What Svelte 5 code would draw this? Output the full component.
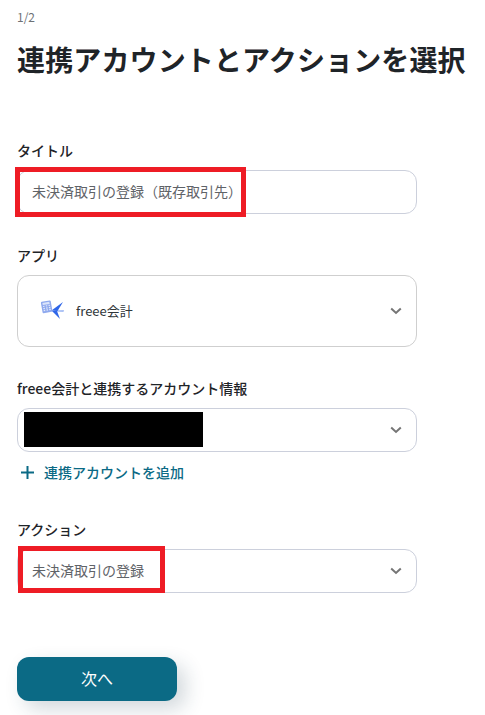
<script>
  let fields = {
    title: '未決済取引の登録（既存取引先）',
    app: 'freee会計',
    action: '未決済取引の登録'
  };
</script>

<div class="page">
  <div class="step">1/2</div>
  <h1>連携アカウントとアクションを選択</h1>

  <section class="first">
    <div class="label">タイトル</div>
    <div class="box">
      <span class="value">{fields.title}</span>
      <div class="mark mark-title"></div>
    </div>
  </section>

  <section class="app">
    <div class="label">アプリ</div>
    <div class="box tall">
      <svg class="logo" width="26" height="26" viewBox="0 0 26 26">
        <g transform="rotate(-10 9 9)">
          <rect x="3.5" y="4" width="10" height="11.5" rx="1" fill="#8fa9ee" />
          <rect x="5" y="5.2" width="7" height="2.2" fill="#dbe4fa" />
          <path d="M5 8.8h1.5M7.8 8.8h1.5M10.6 8.8h1.5M5 10.9h1.5M7.8 10.9h1.5M10.6 10.9h1.5M5 13h1.5M7.8 13h1.5M10.6 13h1.5" stroke="#e4eafb" stroke-width="1.2" />
        </g>
        <path d="M14 13.6 L26 13 L25.5 15 L15 14.6 Z" fill="#a9c0f5" />
        <path d="M25 5 L13.5 13.6 L19.5 14 Z" fill="#2f66e8" />
        <path d="M14 14 L22 22 L19 14 Z" fill="#2f66e8" />
      </svg>
      <span class="value dark">{fields.app}</span>
      <svg class="chev" width="12" height="8" viewBox="0 0 12 8"><path d="M1.2 1.5 L6 6 L10.8 1.5" fill="none" stroke="#757575" stroke-width="2" /></svg>
    </div>
  </section>

  <section class="account">
    <div class="label">freee会計と連携するアカウント情報</div>
    <div class="box">
      <div class="masked"></div>
      <svg class="chev" width="12" height="8" viewBox="0 0 12 8"><path d="M1.2 1.5 L6 6 L10.8 1.5" fill="none" stroke="#757575" stroke-width="2" /></svg>
    </div>
    <div class="add">
      <svg width="13" height="13" viewBox="0 0 13 13"><path d="M6.5 0 V13 M0 6.5 H13" stroke="#0b6a85" stroke-width="2" /></svg>
      <span>連携アカウントを追加</span>
    </div>
  </section>

  <section class="action">
    <div class="label">アクション</div>
    <div class="box">
      <span class="value">{fields.action}</span>
      <svg class="chev" width="12" height="8" viewBox="0 0 12 8"><path d="M1.2 1.5 L6 6 L10.8 1.5" fill="none" stroke="#757575" stroke-width="2" /></svg>
      <div class="mark mark-action"></div>
    </div>
  </section>

  <button class="next">次へ</button>
</div>

<style>
  :global(body) {
    margin: 0;
    background: #fff;
  }

  .page {
    height: 715px;
    box-sizing: border-box;
    padding: 9px 0 0 17px;
    overflow: hidden;
    font-family: "Noto Sans CJK JP", "Noto Sans", sans-serif;
    color: #1f2428;
  }

  .step {
    font-size: 12px;
    line-height: 16px;
    color: #6e7276;
  }

  h1 {
    margin: 13px 0 0;
    font-size: 28px;
    line-height: 42px;
    font-weight: 700;
    letter-spacing: 0.13px;
    white-space: nowrap;
  }

  section {
    width: 400px;
  }

  .first {
    margin-top: 60px;
  }

  .app {
    margin-top: 31px;
  }

  .account {
    margin-top: 31px;
  }

  .action {
    margin-top: 36px;
  }

  .label {
    font-size: 14px;
    line-height: 20px;
    font-weight: 500;
    padding-bottom: 1px;
    margin-bottom: 9px;
  }

  .box {
    position: relative;
    display: flex;
    align-items: center;
    box-sizing: border-box;
    height: 44px;
    padding: 0 14px 2px;
    border: 1px solid #ccd0dc;
    border-radius: 12px;
  }

  .tall {
    height: 72px;
    border-color: #cfcfcf;
    padding-left: 20px;
  }

  .value {
    font-size: 14px;
    color: #5f6368;
  }

  .value.dark {
    font-size: 13px;
    color: #30363a;
    margin-left: 12px;
  }

  .masked {
    position: absolute;
    left: 6px;
    top: 3px;
    width: 179px;
    height: 35px;
    background: #000;
  }

  .box .chev {
    position: absolute;
    right: 14px;
    top: 50%;
    margin-top: -4px;
  }

  .add {
    display: flex;
    align-items: center;
    gap: 10px;
    margin-top: 10px;
    padding-bottom: 1px;
    padding-left: 4px;
    font-size: 14px;
    line-height: 20px;
    font-weight: 500;
    color: #0b6a85;
  }

  /* red annotation rectangles */
  .mark {
    position: absolute;
    box-sizing: border-box;
    border: 5px solid #ee1c25;
  }

  .mark-title {
    left: -3px;
    top: -4px;
    width: 231px;
    height: 50px;
  }

  .mark-action {
    left: 0;
    top: -4px;
    width: 147px;
    height: 47px;
  }

  .next {
    display: block;
    width: 160px;
    height: 44px;
    margin-top: 64px;
    padding: 0 0 2px;
    border: none;
    border-radius: 12px;
    background: #0b6a85;
    color: #fff;
    font-family: inherit;
    font-size: 16px;
    box-shadow: 8px 8px 20px rgba(30, 60, 80, 0.2);
  }
</style>
